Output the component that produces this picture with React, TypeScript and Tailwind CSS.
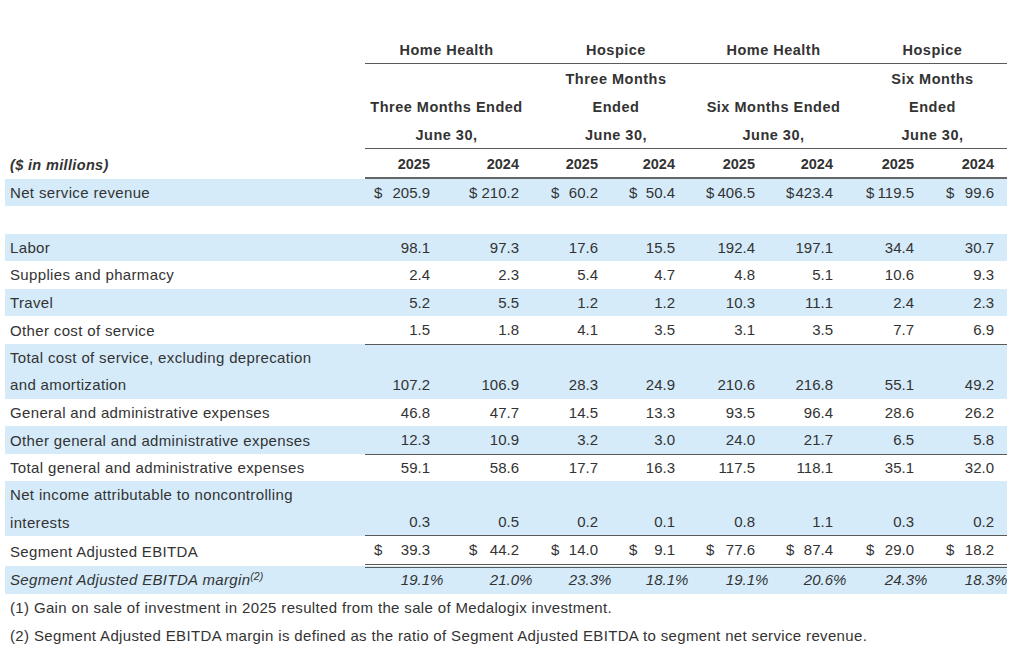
import React from 'react';

type Row = {
  label: string[];
  vals: string[];
  bg?: boolean;
  dollar?: boolean;
  line?: 'single' | 'double';
  italic?: boolean;
  sup?: string;
};

const grid = 'grid grid-cols-[360px_78px_89px_79px_77px_80px_78px_81px_80px]';

// left padding that puts the "$" where the statement has it
const dollarPad = ['pl-[9px]', 'pl-[26px]', 'pl-[19px]', 'pl-[18px]', 'pl-[18px]', 'pl-[18px]', 'pl-[20px]', 'pl-[19px]'];

const rows: Row[] = [
  { label: ['Net service revenue'], bg: true, dollar: true, vals: ['205.9', '210.2', '60.2', '50.4', '406.5', '423.4', '119.5', '99.6'] },
  { label: [''], vals: [] },
  { label: ['Labor'], bg: true, vals: ['98.1', '97.3', '17.6', '15.5', '192.4', '197.1', '34.4', '30.7'] },
  { label: ['Supplies and pharmacy'], vals: ['2.4', '2.3', '5.4', '4.7', '4.8', '5.1', '10.6', '9.3'] },
  { label: ['Travel'], bg: true, vals: ['5.2', '5.5', '1.2', '1.2', '10.3', '11.1', '2.4', '2.3'] },
  { label: ['Other cost of service'], line: 'single', vals: ['1.5', '1.8', '4.1', '3.5', '3.1', '3.5', '7.7', '6.9'] },
  {
    label: ['Total cost of service, excluding deprecation', 'and amortization'],
    bg: true,
    vals: ['107.2', '106.9', '28.3', '24.9', '210.6', '216.8', '55.1', '49.2'],
  },
  { label: ['General and administrative expenses'], vals: ['46.8', '47.7', '14.5', '13.3', '93.5', '96.4', '28.6', '26.2'] },
  { label: ['Other general and administrative expenses'], bg: true, line: 'single', vals: ['12.3', '10.9', '3.2', '3.0', '24.0', '21.7', '6.5', '5.8'] },
  { label: ['Total general and administrative expenses'], vals: ['59.1', '58.6', '17.7', '16.3', '117.5', '118.1', '35.1', '32.0'] },
  {
    label: ['Net income attributable to noncontrolling', 'interests'],
    bg: true,
    line: 'single',
    vals: ['0.3', '0.5', '0.2', '0.1', '0.8', '1.1', '0.3', '0.2'],
  },
  { label: ['Segment Adjusted EBITDA'], dollar: true, line: 'double', vals: ['39.3', '44.2', '14.0', '9.1', '77.6', '87.4', '29.0', '18.2'] },
  {
    label: ['Segment Adjusted EBITDA margin'],
    sup: '(2)',
    bg: true,
    italic: true,
    vals: ['19.1', '21.0', '23.3', '18.1', '19.1', '20.6', '24.3', '18.3'],
  },
];

const DataRow: React.FC<{ row: Row }> = ({ row }) => {
  const tall = row.label.length > 1;
  const height = tall ? 'h-[55px]' : row.line === 'double' ? 'h-[30px]' : 'h-[27.5px]';
  const border =
    row.line === 'single'
      ? 'border-b-[1.5px] border-[#5a5a5a]'
      : row.line === 'double'
        ? 'border-b-4 border-double border-[#5a5a5a]'
        : '';
  return (
    <div className={`${grid} ${height} ${row.bg ? 'bg-[#d5ebfa]' : ''} ${row.italic ? 'italic' : ''}`}>
      <div className={`pl-[5px] flex flex-col ${tall ? 'justify-end' : 'justify-center'}`}>
        {row.label.map((l, i) => (
          <div key={i} className="leading-[27.5px] whitespace-nowrap tracking-[0.35px]">
            {l}
            {row.sup && <sup className="text-[10.5px] tracking-normal">{row.sup}</sup>}
          </div>
        ))}
      </div>
      {row.vals.map((v, i) => (
        <div
          key={i}
          className={`flex ${tall ? 'items-end' : 'items-center'} ${row.dollar ? dollarPad[i] : ''} ${border}`}
        >
          <div className="flex w-full leading-[27.5px]">
            {row.dollar && <span>$</span>}
            <span className="flex-1 text-right">{v}</span>
            <span className="w-[13px]">{row.italic ? '%' : ''}</span>
          </div>
        </div>
      ))}
    </div>
  );
};

const HeaderCell: React.FC<{ text?: string; line?: boolean; shift: string }> = ({ text, line, shift }) => (
  <div className={`col-span-2 flex items-center justify-center pt-[3px] ${shift} ${line ? 'border-b-[1.5px] border-[#5a5a5a]' : ''}`}>
    {text}
  </div>
);

export default function App() {
  const shifts = ['pr-[4px]', 'pl-[12px]', 'pl-[13px]', 'pl-[12px]'];
  const heights = ['h-[28px]', 'h-[28.33px]', 'h-[28.33px]', 'h-[28.33px]'];
  const header: (string | undefined)[][] = [
    ['Home Health', 'Hospice', 'Home Health', 'Hospice'],
    [undefined, 'Three Months', undefined, 'Six Months'],
    ['Three Months Ended', 'Ended', 'Six Months Ended', 'Ended'],
    ['June 30,', 'June 30,', 'June 30,', 'June 30,'],
  ];
  return (
    <div className="w-[1024px] h-[668px] bg-white text-[#333] text-[15px] font-['Liberation_Sans',Arial,sans-serif] pt-[36px] pl-[5px] overflow-hidden">
      <div className="w-[1002px]">
        {header.map((r, ri) => (
          <div key={ri} className={`${grid} ${heights[ri]} font-bold text-[14.5px] tracking-[0.5px]`}>
            <div />
            {r.map((t, ci) => (
              <HeaderCell key={ci} text={t} shift={shifts[ci]} line={ri === 0 || ri === 3} />
            ))}
          </div>
        ))}
        <div className={`${grid} h-[30px] font-bold text-[14.5px]`}>
          <div className="pl-[5px] pt-[3px] flex items-center italic tracking-[0.35px]">($ in millions)</div>
          {['2025', '2024', '2025', '2024', '2025', '2024', '2025', '2024'].map((y, i) => (
            <div key={i} className="flex items-center justify-end pt-[3px] pr-[13px] border-b-2 border-[#666]">
              {y}
            </div>
          ))}
        </div>
        {rows.map((r, i) => (
          <DataRow key={i} row={r} />
        ))}
        <div className="pl-[5px] pt-[0.5px] tracking-[0.35px]">
          <p className="leading-[28px]">(1) Gain on sale of investment in 2025 resulted from the sale of Medalogix investment.</p>
          <p className="leading-[28px]">
            (2) Segment Adjusted EBITDA margin is defined as the ratio of Segment Adjusted EBITDA to segment net service
            revenue.
          </p>
        </div>
      </div>
    </div>
  );
}
